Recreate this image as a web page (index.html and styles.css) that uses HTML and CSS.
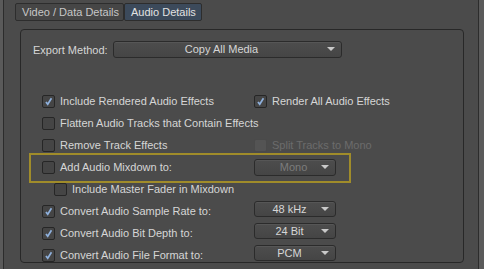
FILE: index.html
```html
<html>
    <head>
        <title>Audio Details</title>
        <meta name="viewport" content="width=device-width, initial-scale=1.0">
        <link rel="stylesheet" href="styles.css">
    </head>
    <body>
    <div class="window">
        <!-- tabs -->
        <div class="tabs">
            <div class="tab">Video / Data Details</div>
            <div class="tab tab-active">Audio Details</div>
        </div>

        <div class="panel">
            <div class="export-row">
                <span class="export-label">Export Method:</span>
                <div class="select select-wide">Copy All Media</div>
            </div>

            <div class="options">
                <div class="option-row">
                    <label class="check"><span class="box"><svg viewBox="0 0 13 13"><path d="M3.5 7 L5.6 9.8 L10 2.6"/></svg></span>Include Rendered Audio Effects</label>
                    <label class="check"><span class="box"><svg viewBox="0 0 13 13"><path d="M3.5 7 L5.6 9.8 L10 2.6"/></svg></span>Render All Audio Effects</label>
                </div>
                <div class="option-row">
                    <label class="check"><span class="box"></span>Flatten Audio Tracks that Contain Effects</label>
                </div>
                <div class="option-row">
                    <label class="check"><span class="box"></span>Remove Track Effects</label>
                    <label class="check check-disabled"><span class="box"></span>Split Tracks to Mono</label>
                </div>
                <div class="option-row option-highlight">
                    <label class="check"><span class="box"></span>Add Audio Mixdown to:</label>
                    <div class="select select-disabled">Mono</div>
                </div>
                <div class="option-row option-indent">
                    <label class="check"><span class="box"></span>Include Master Fader in Mixdown</label>
                </div>
                <div class="option-row">
                    <label class="check"><span class="box"><svg viewBox="0 0 13 13"><path d="M3.5 7 L5.6 9.8 L10 2.6"/></svg></span>Convert Audio Sample Rate to:</label>
                    <div class="select select-up">48 kHz</div>
                </div>
                <div class="option-row">
                    <label class="check"><span class="box"><svg viewBox="0 0 13 13"><path d="M3.5 7 L5.6 9.8 L10 2.6"/></svg></span>Convert Audio Bit Depth to:</label>
                    <div class="select select-up">24 Bit</div>
                </div>
                <div class="option-row">
                    <label class="check"><span class="box"><svg viewBox="0 0 13 13"><path d="M3.5 7 L5.6 9.8 L10 2.6"/></svg></span>Convert Audio File Format to:</label>
                    <div class="select select-up">PCM</div>
                </div>
            </div>
        </div>
    </div>
    </body>
</html>
```

FILE: styles.css
```css
body{
    margin: 0;
    background-color: #5a5a5a;
    font-family: "Liberation Sans", Arial, sans-serif;
    font-size: 11px;
    color: #d6d6d6;
}

.window{
    margin: 0 5px 0 3px;
    height: 269px;
    box-sizing: border-box;
    background-color: #4b4b4b;
    border-left: 1px solid #2c2c2c;
    border-right: 1px solid #2c2c2c;
    padding-top: 3px;
}

.tabs{
    display: flex;
    margin-left: 11px;
    height: 18px;
}

.tab{
    box-sizing: border-box;
    height: 18px;
    line-height: 16px;
    padding: 0 4px 0 6px;
    border: 1px solid #2d2d2d;
    border-radius: 2px;
    background-color: #464646;
    color: #c6c6c6;
}

.tab-active{
    background-color: #3c4a5b;
    color: #e2e2e2;
    padding: 0 5px 0 6px;
}

.panel{
    margin: 8px 14px 0 16px;
    height: 234px;
    box-sizing: border-box;
    border: 1px solid #282828;
    border-radius: 4px;
    padding: 11px 0 0 12px;
}

.export-row{
    display: flex;
    align-items: center;
    height: 17px;
}

.export-label{
    width: 80px;
}

.select{
    position: relative;
    box-sizing: border-box;
    width: 82px;
    height: 17px;
    line-height: 15px;
    border: 1px solid #2b2b2b;
    border-radius: 3px;
    background: linear-gradient(#4d4d4d, #454545);
    box-shadow: inset 0 1px 0 #565656;
    text-align: center;
    padding-right: 11px;
    color: #d6d6d6;
}

.select::after{
    content: "";
    position: absolute;
    right: 6px;
    top: 5px;
    border-left: 4px solid transparent;
    border-right: 4px solid transparent;
    border-top: 4px solid #c9c9c9;
}

.select-wide{
    width: 229px;
    padding-right: 12px;
}

.select-disabled{
    color: #7c7c7c;
    padding-right: 3px;
}

.select-up{
    margin-bottom: 5px;
    height: 16px;
    line-height: 14px;
}

.options{
    margin: 32px 0 0 9px;
}

.option-row{
    display: grid;
    grid-template-columns: 212px 1fr;
    align-items: center;
    height: 22px;
}

.option-indent{
    margin-left: 12px;
}

.option-highlight{
    position: relative;
}

.option-highlight::before{
    content: "";
    position: absolute;
    left: -13px;
    top: -3px;
    width: 322px;
    height: 30px;
    box-sizing: border-box;
    border: 2px solid #a08c2a;
}

.check{
    display: flex;
    align-items: center;
    gap: 5px;
    white-space: nowrap;
}

.box{
    flex-shrink: 0;
    box-sizing: border-box;
    width: 13px;
    height: 13px;
    border: 1px solid #262626;
    border-radius: 2px;
    background-color: #454545;
    display: flex;
}

.box svg{
    width: 11px;
    height: 11px;
}

.box path{
    fill: none;
    stroke: #8eb0dc;
    stroke-width: 2;
}

.check-disabled{
    color: #6c6c6c;
}

.check-disabled .box{
    background-color: #545454;
    border-color: #4a4a4a;
}
```
